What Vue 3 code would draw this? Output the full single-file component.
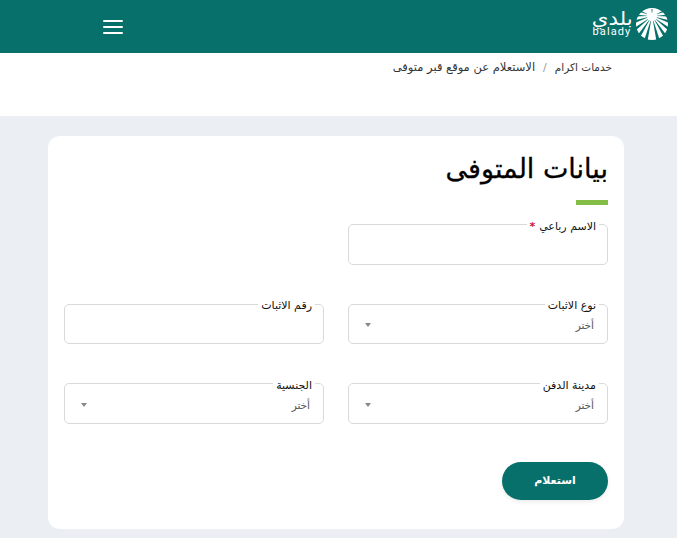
<script setup>
const fronds = [-112, -92, -72, -52, -33, -14, 14, 33, 52, 72, 92, 112]
const rows = [
  [{ label: 'الاسم رباعي', required: true }, null],
  [{ label: 'نوع الاثبات', select: true }, { label: 'رقم الاثبات' }],
  [{ label: 'مدينة الدفن', select: true }, { label: 'الجنسية', select: true }],
]
</script>

<template>
  <div class="page" dir="rtl">
    <header class="topbar">
      <div class="brand" dir="ltr">
        <div class="wordmark">
          <span class="ar">بلدي</span>
          <span class="en">balady</span>
        </div>
        <svg class="palm" viewBox="0 0 32 32" width="32" height="32">
          <circle cx="16" cy="16" r="16" fill="#fff" />
          <g fill="#07706b">
            <path v-for="a in fronds" :key="a" d="M15.8 13 L14.2 34 L17.8 34 L16.2 13 Z" :transform="`rotate(${a} 16 8)`" />
          </g>
          <path d="M15.5 1 L16.5 1 L16.2 5 L15.8 5 Z" fill="#07706b" />
        </svg>
      </div>
      <button class="burger" aria-label="menu"><i></i><i></i><i></i></button>
    </header>

    <nav class="crumbs">
      <span class="c1">خدمات اكرام</span>
      <span class="sep">/</span>
      <span class="c2">الاستعلام عن موقع قبر متوفى</span>
    </nav>

    <main class="content">
      <section class="card">
        <h1>بيانات المتوفى</h1>
        <div class="accent"></div>
        <div class="grid">
          <template v-for="(row, r) in rows" :key="r">
            <template v-for="(f, c) in row" :key="c">
              <fieldset v-if="f" class="field">
                <legend>{{ f.label }}<em v-if="f.required"> *</em></legend>
                <div v-if="f.select" class="select">
                  <span>أختر</span>
                  <b class="caret"></b>
                </div>
              </fieldset>
              <div v-else></div>
            </template>
          </template>
        </div>
        <div class="actions">
          <button class="submit">استعلام</button>
        </div>
      </section>
    </main>
  </div>
</template>

<style>
html, body { margin: 0; height: 538px; overflow: hidden; background: #ebeef3; }
</style>

<style scoped>
.page {
  width: 677px;
  height: 538px;
  overflow: hidden;
  font-family: "DejaVu Sans", "Noto Sans", sans-serif;
  background: #ebeef3;
}
.topbar {
  height: 53px;
  background: #07706b;
  display: flex;
  align-items: center;
  justify-content: space-between;
  padding: 0 9px 0 103px;
  box-sizing: border-box;
  direction: ltr;
  flex-direction: row-reverse;
}
.brand { display: flex; align-items: center; gap: 4px; margin-top: -5px; }
.wordmark { display: flex; flex-direction: column; align-items: center; color: #fff; width: 40px; }
.wordmark .ar { font-size: 19px; line-height: 15px; transform: scaleX(1.12); }
.wordmark .en { font-family: Roboto, sans-serif; font-size: 11px; letter-spacing: 1.1px; line-height: 12px; }
.burger {
  width: 20px;
  padding: 0;
  border: 0;
  background: none;
  display: flex;
  flex-direction: column;
  gap: 4px;
}
.burger i { display: block; height: 2px; background: #fff; border-radius: 1px; }
.crumbs {
  height: 63px;
  box-sizing: border-box;
  background: #fff;
  padding: 7px 65px 0 0;
  line-height: 15px;
  color: #333;
  display: flex;
  gap: 8px;
  font-size: 11px;
}
.crumbs .c1 { font-size: 10.5px; }
.crumbs .c2 { font-size: 11.5px; }
.crumbs .sep { color: #999; }
.content { padding: 20px 53px 0 48px; }
.card {
  height: 393px;
  box-sizing: border-box;
  background: #fff;
  border-radius: 12px;
  padding: 14px 16px 0;
}
h1 {
  margin: 0;
  font-size: 27px;
  line-height: 38px;
  font-weight: 400;
  color: #000;
  -webkit-text-stroke: 0.3px #000;
}
.accent { width: 32px; height: 5px; background: #84bd45; margin-top: 12px; }
.grid {
  display: grid;
  grid-template-columns: 260px 260px;
  column-gap: 24px;
  row-gap: 38.25px;
  margin-top: 18.5px;
}
.field {
  margin: 0;
  padding: 0 8px;
  min-width: 0;
  height: 48.25px;
  box-sizing: border-box;
  border: 1px solid #d9d9d9;
  border-radius: 5px;
  margin-top: -7px;
}
legend {
  padding: 4px 3px 0;
  font-size: 11px;
  line-height: 12px;
  color: #111;
}
legend em { color: #c8141e; font-style: normal; font-weight: 700; }
.select {
  display: flex;
  align-items: center;
  justify-content: space-between;
  height: 26px;
  padding: 0 5px 0 8px;
  font-size: 10.5px;
  color: #555;
}
.caret {
  width: 0;
  height: 0;
  border: 3.5px solid transparent;
  border-top: 4px solid #888;
  border-bottom: 0;
}
.actions { margin-top: 38px; display: flex; }
.submit {
  width: 106px;
  height: 38px;
  border: 0;
  border-radius: 19px;
  background: #07706b;
  color: #fff;
  font-family: inherit;
  font-size: 11px;
  font-weight: 700;
  box-shadow: 0 2px 4px rgba(0,0,0,.08);
}
</style>
